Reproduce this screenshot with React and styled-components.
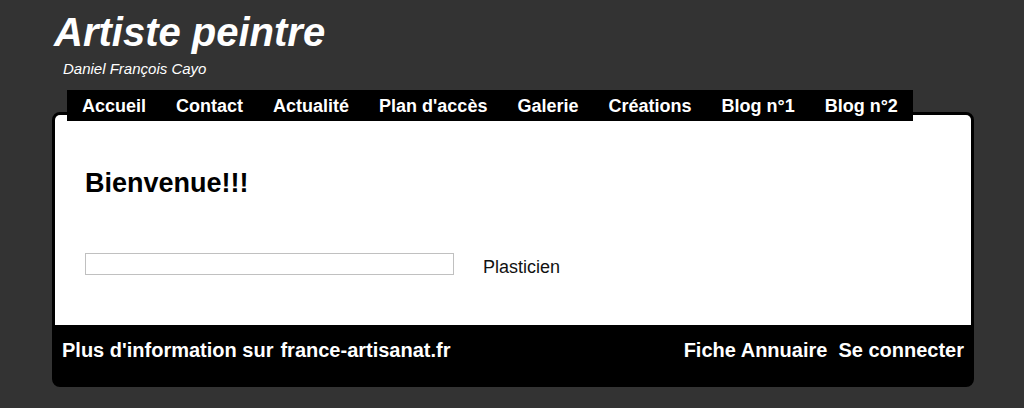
import React from "react";
import styled, { createGlobalStyle } from "styled-components";

const Global = createGlobalStyle`
  html, body { margin: 0; padding: 0; background: #333333; }
  body { font-family: "Liberation Sans", Arial, sans-serif; }
  * { box-sizing: border-box; }
`;

const Page = styled.div`
  width: 922px;
  margin-left: 52px;
  display: flex;
  flex-direction: column;
`;

const Title = styled.h1`
  margin: 9px 0 0 2px;
  font-size: 40px;
  line-height: 46px;
  font-weight: bold;
  font-style: italic;
  color: #fff;
`;

const Subtitle = styled.div`
  margin: 5px 0 0 11px;
  font-size: 15px;
  line-height: 18px;
  font-style: italic;
  color: #fff;
`;

const Nav = styled.nav`
  position: relative;
  z-index: 1;
  align-self: flex-start;
  display: flex;
  margin: 12px 0 -9px 15px;
  background: #000;
`;

const NavItem = styled.a`
  padding: 1px 15px 0;
  font-size: 18px;
  line-height: 30px;
  font-weight: bold;
  color: #fff;
  text-decoration: none;
`;

const Panel = styled.div`
  border: 3px solid #000;
  border-radius: 8px;
  background: #000;
  display: flex;
  flex-direction: column;
`;

const Content = styled.div`
  height: 210px;
  padding: 52px 30px 0;
  background: #fff;
  border-radius: 5px 5px 0 0;
`;

const Heading = styled.h2`
  margin: 0;
  font-size: 27px;
  line-height: 32px;
  font-weight: bold;
  color: #000;
`;

const Row = styled.div`
  display: flex;
  align-items: flex-start;
  gap: 29px;
  margin-top: 54px;
`;

const Field = styled.div`
  width: 369px;
  height: 22px;
  border: 1px solid #c0c0c0;
  background: #fff;
`;

const Label = styled.span`
  margin-top: 3px;
  font-size: 18px;
  line-height: 22px;
  color: #111;
`;

const Footer = styled.div`
  height: 59px;
  padding: 13px 7px 0;
  display: flex;
  justify-content: space-between;
  align-items: flex-start;
`;

const FooterGroup = styled.div`
  display: flex;
  gap: ${(p) => p.$gap}px;
`;

const FooterText = styled.span`
  font-size: 20px;
  line-height: 24px;
  font-weight: bold;
  color: #fff;
`;

const navItems = [
  "Accueil",
  "Contact",
  "Actualité",
  "Plan d'accès",
  "Galerie",
  "Créations",
  "Blog n°1",
  "Blog n°2",
];

export default function App() {
  return (
    <>
      <Global />
      <Page>
        <Title>Artiste peintre</Title>
        <Subtitle>Daniel François Cayo</Subtitle>
        <Nav>
          {navItems.map((n) => (
            <NavItem key={n}>{n}</NavItem>
          ))}
        </Nav>
        <Panel>
          <Content>
            <Heading>Bienvenue!!!</Heading>
            <Row>
              <Field />
              <Label>Plasticien</Label>
            </Row>
          </Content>
          <Footer>
            <FooterGroup $gap={7}>
              <FooterText>Plus d'information sur</FooterText>
              <FooterText>france-artisanat.fr</FooterText>
            </FooterGroup>
            <FooterGroup $gap={11}>
              <FooterText>Fiche Annuaire</FooterText>
              <FooterText>Se connecter</FooterText>
            </FooterGroup>
          </Footer>
        </Panel>
      </Page>
    </>
  );
}
